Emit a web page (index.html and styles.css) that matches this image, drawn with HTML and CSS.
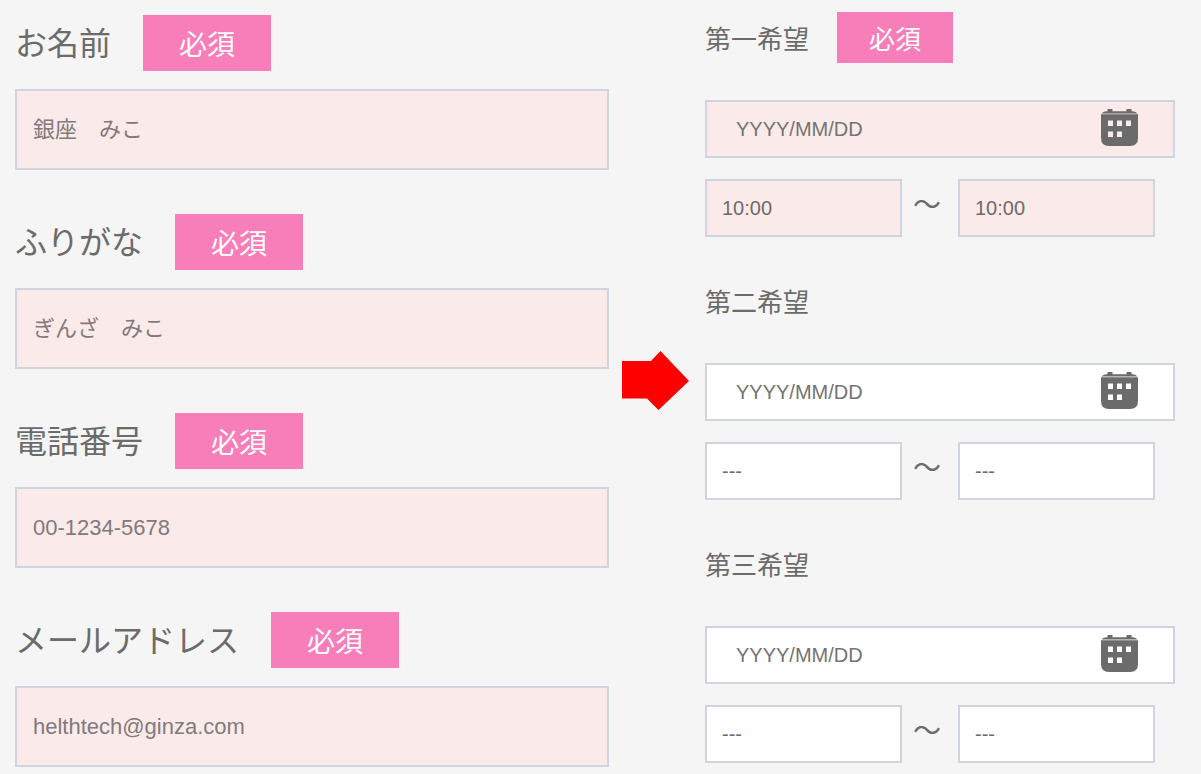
FILE: index.html
```html
<!DOCTYPE html>
<html lang="ja">
<head>
<meta charset="utf-8">
<meta name="viewport" content="width=device-width, initial-scale=1">
<title>ご予約フォーム</title>
<link rel="stylesheet" href="styles.css">
</head>
<body>
<svg class="defs" aria-hidden="true">
  <symbol id="calendar" viewBox="0 0 37 37">
    <path d="M6.500 0h5v2.300h14V0h5v2.300h1.500q3 .4 4.500 2.200H.5Q2 2.700 5 2.300h1.500z"/>
    <path fill-rule="evenodd" d="M0 5.200h37V29q0 8-8 8H8q-8 0-8-8zM7 11.500v5.500h5v-5.500zm9 0v5.500h5v-5.500zm9 0v5.500h5v-5.500zM7 22.500v5.500h5v-5.500zm9 0v5.500h5v-5.500z"/>
  </symbol>
</svg>
<form class="form">
  <div class="contact">
    <div class="field">
      <div class="head"><label for="name">お名前</label><span class="badge">必須</span></div>
      <input class="box" id="name" type="text" placeholder="銀座　みこ">
    </div>
    <div class="field">
      <div class="head"><label for="kana">ふりがな</label><span class="badge">必須</span></div>
      <input class="box" id="kana" type="text" placeholder="ぎんざ　みこ">
    </div>
    <div class="field">
      <div class="head"><label for="tel">電話番号</label><span class="badge">必須</span></div>
      <input class="box" id="tel" type="tel" placeholder="00-1234-5678">
    </div>
    <div class="field">
      <div class="head"><label for="mail">メールアドレス</label><span class="badge">必須</span></div>
      <input class="box" id="mail" type="email" placeholder="helthtech@ginza.com">
    </div>
  </div>
  <svg class="arrow" viewBox="0 0 67 59" aria-hidden="true"><path fill="#f00" d="M0 10h29L38.500 0 67 30 36.500 59 25 47.500H0z"/></svg>
  <div class="wishes">
    <div class="wish required">
      <div class="head"><label for="date1">第一希望</label><span class="badge">必須</span></div>
      <div class="date">
        <input class="box" id="date1" type="text" placeholder="YYYY/MM/DD">
        <button class="pick" type="button" aria-label="カレンダー"><svg><use href="#calendar"/></svg></button>
      </div>
      <div class="times">
        <select class="box" aria-label="開始時刻"><option>10:00</option></select>
        <span class="tilde">～</span>
        <select class="box" aria-label="終了時刻"><option>10:00</option></select>
      </div>
    </div>
    <div class="wish">
      <div class="head"><label for="date2">第二希望</label></div>
      <div class="date">
        <input class="box" id="date2" type="text" placeholder="YYYY/MM/DD">
        <button class="pick" type="button" aria-label="カレンダー"><svg><use href="#calendar"/></svg></button>
      </div>
      <div class="times">
        <select class="box" aria-label="開始時刻"><option>---</option></select>
        <span class="tilde">～</span>
        <select class="box" aria-label="終了時刻"><option>---</option></select>
      </div>
    </div>
    <div class="wish">
      <div class="head"><label for="date3">第三希望</label></div>
      <div class="date">
        <input class="box" id="date3" type="text" placeholder="YYYY/MM/DD">
        <button class="pick" type="button" aria-label="カレンダー"><svg><use href="#calendar"/></svg></button>
      </div>
      <div class="times">
        <select class="box" aria-label="開始時刻"><option>---</option></select>
        <span class="tilde">～</span>
        <select class="box" aria-label="終了時刻"><option>---</option></select>
      </div>
    </div>
  </div>
</form>
</body>
</html>
```
FILE: styles.css
```css
* {
  box-sizing: border-box;
}

body {
  margin: 0;
  background: #f5f5f5;
  color: #6b6b6b;
  font-family: "Noto Sans CJK JP", sans-serif;
}

.defs {
  position: absolute;
  width: 0;
  height: 0;
}

.form {
  display: grid;
  grid-template-columns: 594fr 70px 470fr;
  column-gap: 13px;
  align-items: start;
  padding: 0 26px 0 15px;
}

.contact {
  display: grid;
  gap: 44px;
  padding: 15px 0 7px;
}

.field {
  display: grid;
  gap: 18px;
}

.head {
  display: flex;
  align-items: flex-start;
  gap: 32px;
  font-size: 32px;
  line-height: 52px;
}

.badge {
  padding: 0 36px;
  background: #f77eb9;
  color: #fff;
  font-size: 28px;
  line-height: 56px;
}

.box {
  width: 100%;
  min-width: 0;
  height: 81px;
  margin: 0;
  padding: 0 16px;
  border: 2px solid #cfd4de;
  border-radius: 0;
  outline: 0;
  appearance: none;
  background: #faeaea;
  color: #6e6b6b;
  font-family: "Liberation Sans", "Noto Sans CJK JP", sans-serif;
  font-size: 22px;
}

.box::placeholder {
  color: #827a7a;
  opacity: 1;
}

.arrow {
  align-self: center;
  width: 67px;
  height: 59px;
  margin-bottom: 14px;
}

.wishes {
  display: grid;
  gap: 38px;
  padding-top: 12px;
}

.wish .head {
  gap: 28px;
  margin-bottom: 37px;
  font-size: 26px;
  line-height: 51px;
}

.wish .badge {
  padding: 0 32px;
  font-size: 26px;
  line-height: 51px;
}

.wish .box {
  height: 58px;
  background: #fff;
  font-size: 20px;
}

.wish.required .box {
  background: #faeaea;
}

.date {
  position: relative;
  margin-bottom: 21px;
  display: flex;
}

.wish .date .box {
  padding: 0 29px;
}

.wish .date .box::placeholder {
  color: #757373;
}

.pick {
  position: absolute;
  top: 9px;
  right: 37px;
  padding: 0;
  border: 0;
  background: none;
  color: #6b6b6b;
  cursor: pointer;
}

.pick svg {
  display: block;
  width: 37px;
  height: 37px;
  fill: currentColor;
}

.times {
  display: grid;
  grid-template-columns: 1fr 28px 1fr;
  column-gap: 14px;
  padding-right: 20px;
}

.wish .times .box {
  padding: 0 15px;
}

.tilde {
  margin-left: -3px;
  font-size: 28px;
  line-height: 48px;
}
```
